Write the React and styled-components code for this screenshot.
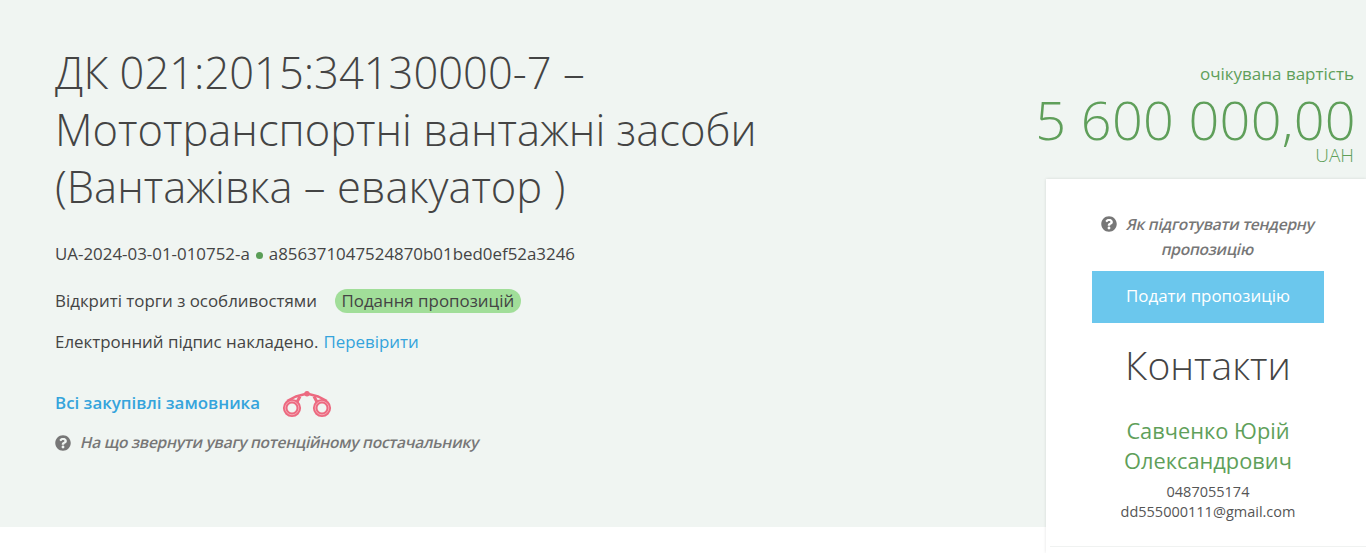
import React from "react";
import styled, { createGlobalStyle } from "styled-components";

const Global = createGlobalStyle`
  html, body { margin: 0; padding: 0; background: #fff; height: 100%; overflow: hidden; }
  body { font-family: "Open Sans", "Noto Sans", sans-serif; color: #444; }
  * { box-sizing: border-box; }
`;

const Hero = styled.section`
  height: 527px;
  background: #f0f5f2;
  display: flex;
  justify-content: space-between;
  align-items: flex-start;
`;

const Main = styled.div`
  width: 760px;
  margin-left: 55px;
  padding-top: 44px;
`;

const Title = styled.h1`
  margin: 0 0 27px;
  font-weight: 300;
  font-size: 43.5px;
  line-height: 57px;
  color: #444;
`;

const Line = styled.div`
  font-size: 16.9px;
  line-height: 24px;
  color: #444;
  margin-bottom: ${p => p.$gap || 0}px;
  display: flex;
  align-items: center;
  white-space: nowrap;
`;

const Dot = styled.span`
  width: 7px;
  height: 7px;
  border-radius: 50%;
  background: #5a9e57;
  margin: 2px 6px 0;
`;

const Badge = styled.span`
  background: #a1de99;
  border-radius: 12px;
  height: 24px;
  line-height: 24px;
  padding: 0 7px 0 6.500px;
  margin-left: 18px;
  margin-top: -1px;
`;

const Link = styled.a`
  color: #35a4dc;
  text-decoration: none;
  font-weight: ${p => p.$bold ? 600 : 400};
  margin-left: ${p => p.$ml || 0}px;
`;

const CustomerRow = styled.div`
  display: flex;
  align-items: center;
  height: 40px;
  margin-top: 28px;
  font-size: 16.9px;
`;

const Binoculars = styled.svg`
  width: 52px;
  height: 30px;
  margin-left: 22px;
  margin-top: 5px;
`;

const Slant = styled.span`
  display: block;
  font-size: 15.6px;
  line-height: 25px;
  font-weight: 600;
  letter-spacing: -0.3px;
  color: #777;
  white-space: nowrap;
  transform: skewX(-13deg);
`;

const HintRow = styled.div`
  display: flex;
  align-items: center;
  margin-top: 8px;
`;

const CardHint = styled.div`
  width: 240px;
  display: flex;
  flex-direction: column;
  align-items: center;
`;

const HintFirst = styled.div`
  display: flex;
  align-items: center;
`;

const HelpIcon = styled.svg`
  width: 16px;
  height: 16px;
  fill: #777;
  flex: none;
  margin-right: ${p => p.$mr}px;
  margin-top: ${p => p.$mt || 0}px;
`;

const Side = styled.aside`
  width: 330px;
  padding-top: 62px;
  display: flex;
  flex-direction: column;
  align-items: flex-end;
`;

const PriceLabel = styled.div`
  font-size: 17px;
  line-height: 24px;
  color: #5f9f5a;
  padding-right: 12px;
`;

const Price = styled.div`
  font-size: 54px;
  font-weight: 300;
  line-height: 54px;
  letter-spacing: 0.3px;
  color: #5f9f5a;
  padding-right: 10px;
  margin-top: 6px;
  white-space: nowrap;
`;

const Currency = styled.div`
  font-size: 19px;
  font-weight: 300;
  line-height: 18px;
  color: #5f9f5a;
  padding-right: 12px;
`;

const Card = styled.div`
  width: 320px;
  height: 374px;
  margin-top: 15px;
  background: #fff;
  box-shadow: 0 0 3px rgba(0, 0, 0, 0.12);
  display: flex;
  flex-direction: column;
  align-items: center;
  padding: 33px 0 0 4px;
`;

const Submit = styled.button`
  width: 232px;
  height: 52px;
  margin-top: 9px;
  padding: 0 0 3px;
  border: 0;
  border-radius: 0;
  background: #6bc7ed;
  color: #fff;
  font: 400 16.9px "Open Sans", sans-serif;
`;

const ContactsTitle = styled.h2`
  margin: 14px 0 0;
  font-weight: 300;
  font-size: 39px;
  line-height: 56px;
  color: #444;
`;

const PersonName = styled.div`
  width: 210px;
  margin-top: 23px;
  text-align: center;
  font-size: 21.8px;
  line-height: 30px;
  color: #5f9f5a;
`;

const ContactLine = styled.div`
  font-size: 14.5px;
  line-height: 20px;
  color: #555;
`;

const Contacts = styled.div`
  margin-top: 6px;
  text-align: center;
`;

const Divider = styled.div`
  width: 100%;
  height: 1px;
  background: #f0f2f1;
  margin-top: 24px;
`;

const Help = ({ mr, mt }) => (
  <HelpIcon $mr={mr} $mt={mt} viewBox="0 0 512 512">
    <path d="M504 256c0 137-111 248-248 248S8 393 8 256 119 8 256 8s248 111 248 248zM262.700 90c-54.500 0-89.300 23-116.600 63.800-3.500 5.300-2.400 12.400 2.700 16.300l34.700 26.300c5.200 3.900 12.600 3 16.700-2.100 17.900-22.700 30.100-35.800 57.300-35.800 20.400 0 45.700 13.100 45.700 33 0 15-12.400 22.700-32.600 34-23.600 13.200-54.800 29.700-54.800 70.900V302c0 6.600 5.400 12 12 12h56c6.600 0 12-5.400 12-12v-1.300c0-28.600 83.500-29.800 83.500-107.200 0-58.300-60.400-102.500-117.600-102.500zM256 338c-25.400 0-46 20.600-46 46s20.600 46 46 46 46-20.600 46-46-20.600-46-46-46z" />
  </HelpIcon>
);

export default function App() {
  return (
    <>
      <Global />
      <Hero>
        <Main>
          <Title>ДК 021:2015:34130000-7 – Мототранспортні вантажні засоби (Вантажівка – евакуатор )</Title>
          <Line $gap={23}>UA-2024-03-01-010752-a<Dot />a856371047524870b01bed0ef52a3246</Line>
          <Line $gap={17}>Відкриті торги з особливостями<Badge>Подання пропозицій</Badge></Line>
          <Line>Електронний підпис накладено.<Link href="#" $ml={5}>Перевірити</Link></Line>
          <CustomerRow>
            <Link href="#" $bold>Всі закупівлі замовника</Link>
            <Binoculars viewBox="0 0 52 30" fill="none" stroke="#ec6a80">
              <circle cx="10" cy="18" r="6.800" strokeWidth="4.600" />
              <circle cx="10" cy="18" r="6.800" strokeWidth="0.800" stroke="#f7b3bf" />
              <circle cx="40" cy="18" r="6.800" strokeWidth="4.600" />
              <circle cx="40" cy="18" r="6.800" strokeWidth="0.800" stroke="#f7b3bf" />
              <path d="M5 11 L14 6.500 L25 3.500 L36 6.500 L45 11" strokeWidth="2.400" />
              <path d="M15 12 L18 6.500 M35 12 L32 6.500" strokeWidth="3" />
              <circle cx="25" cy="3.800" r="2.700" fill="#ec6a80" stroke="none" />
            </Binoculars>
          </CustomerRow>
          <HintRow><Help mr={10} /><Slant>На що звернути увагу потенційному постачальнику</Slant></HintRow>
        </Main>
        <Side>
          <PriceLabel>очікувана вартість</PriceLabel>
          <Price>5 600 000,00</Price>
          <Currency>UAH</Currency>
          <Card>
            <CardHint>
              <HintFirst><Help mr={10} mt={-2} /><Slant>Як підготувати тендерну</Slant></HintFirst>
              <Slant>пропозицію</Slant>
            </CardHint>
            <Submit>Подати пропозицію</Submit>
            <ContactsTitle>Контакти</ContactsTitle>
            <PersonName>Савченко Юрій Олександрович</PersonName>
            <Contacts>
              <ContactLine>0487055174</ContactLine>
              <ContactLine>dd555000111@gmail.com</ContactLine>
            </Contacts>
            <Divider />
          </Card>
        </Side>
      </Hero>
    </>
  );
}
